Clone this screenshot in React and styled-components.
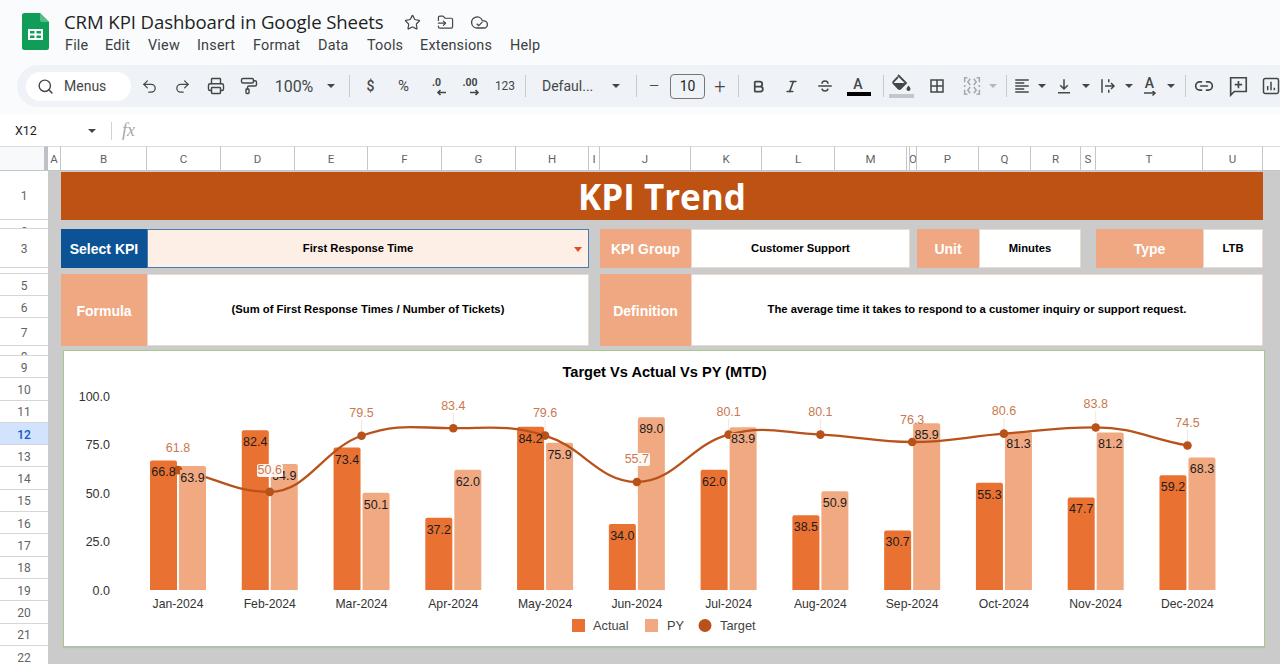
import React from "react";
import styled, { createGlobalStyle } from "styled-components";
import { Undo2, Redo2, Printer, PaintRoller, Search, Star, FolderInput, Bold, Italic, Link2 } from "lucide-react";

const Global = createGlobalStyle`
  html, body { margin: 0; padding: 0; background: #f9fbfd; }
  * { box-sizing: border-box; }
  body { font-family: Roboto, "Liberation Sans", sans-serif; }
`;

const Page = styled.div`
  width: 1280px; height: 664px; overflow: hidden; display: flex; flex-direction: column; background: #f9fbfd;
`;

/* ---------- title bar ---------- */
const TopBar = styled.header`
  height: 65px; flex: none; display: flex; align-items: flex-start; padding: 13px 0 0 22px; gap: 15px;
`;
const LogoWrap = styled.div`width: 27px; height: 37px; flex: none;`;
const TitleCol = styled.div`display: flex; flex-direction: column; gap: 4px; margin-top: -1px;`;
const TitleRow = styled.div`display: flex; align-items: center; height: 20px;`;
const DocTitle = styled.h1`
  margin: 0; font: 400 18.6px/20px "Open Sans", Roboto, sans-serif; color: #1f1f1f; letter-spacing: -0.1px; width: 320px; white-space: nowrap;
`;
const TitleIcon = styled.span`
  display: flex; width: ${(p) => p.$w}px; justify-content: center; color: #444746; margin-left: ${(p) => p.$ml || 0}px;
`;
const Menu = styled.nav`display: flex; padding-left: 1px;`;
const MenuItem = styled.span`
  font: 400 14.4px/20px Roboto, sans-serif; color: #3c4043; width: ${(p) => p.$w}px; letter-spacing: 0.2px;
`;

/* ---------- toolbar ---------- */
const Toolbar = styled.div`
  height: 42px; flex: none; margin-left: 17px; background: #eff3f8; border-radius: 21px 0 0 21px;
  display: flex; align-items: center; padding-left: 9px; overflow: hidden;
`;
const SearchPill = styled.div`
  width: 105px; height: 29px; flex: none; background: #fff; border-radius: 15px; display: flex; align-items: center;
  padding-left: 11px; gap: 10px; color: #444746; font: 400 14px Roboto, sans-serif; margin-right: 2px;
`;
const Tool = styled.div`
  width: ${(p) => p.$w}px; flex: none; height: 30px; display: flex; align-items: center; justify-content: ${(p) => p.$left ? "flex-start" : "center"};
  color: ${(p) => p.$muted ? "#a9acaf" : "#444746"}; font: ${(p) => p.$weight || 400} ${(p) => p.$size || 14}px Roboto, sans-serif;
  padding-left: ${(p) => p.$pl || 0}px;
`;
const Caret = styled.i`
  width: 0; height: 0; border-left: 4px solid transparent; border-right: 4px solid transparent;
  border-top: 4.5px solid ${(p) => p.$muted ? "#b5b8bb" : "#444746"};
`;
const Divider = styled.span`
  width: 1px; height: 22px; flex: none; background: #c7c9cc; margin-left: ${(p) => p.$l}px; margin-right: ${(p) => p.$r}px;
`;
const SizeBox = styled.div`
  width: 35px; height: 25px; margin-left: 4px; flex: none; border: 1px solid #747775; border-radius: 4px; display: flex; align-items: center;
  justify-content: center; font: 400 14px Roboto, sans-serif; color: #1f1f1f;
`;
const Decimal = styled.span`
  display: flex; flex-direction: column; align-items: center; font: 700 10.5px/10px Roboto, sans-serif; color: #444746;
`;
const DecimalArrow = styled.span`margin-left: 9px; height: 7px; display: block;`;
const LetterIcon = styled.span`
  display: flex; flex-direction: column; align-items: center; gap: 0; font: 500 14px/15px Roboto, sans-serif; color: #444746;
`;
const ColorBar = styled.i`display: block; width: 24px; height: 4px; background: #000; margin-left: 2px;`;

const Svg = ({ size = 18, children, ...r }) => (
  <svg width={size} height={size} viewBox="0 0 24 24" fill="none" stroke="currentColor" strokeWidth="2" {...r}>{children}</svg>
);

/* ---------- formula bar ---------- */
const FormulaBar = styled.div`
  height: 31px; flex: none; display: flex; align-items: center; background: #fff; padding-left: 15px; margin-top: 8px;
`;
const NameBox = styled.div`
  width: 83px; display: flex; align-items: center; justify-content: space-between; font: 400 12.5px Roboto, sans-serif; color: #1f1f1f; padding-right: 2px;
`;
const BarRule = styled.span`width: 1px; height: 18px; background: #d0d3d6; margin-left: 13px;`;
const Fx = styled.span`
  font: italic 400 18px "Liberation Serif", serif; color: #a5a8ab; margin-left: 10px;
`;

/* ---------- sheet grid ---------- */
const COLS = [["A",13],["B",86],["C",74],["D",74],["E",73],["F",74],["G",74],["H",73],["I",11],["J",91],["K",71],["L",73],["M",72],["N",3],["O",7],["P",62],["Q",52],["R",50],["S",15],["T",107],["U",60]];
const ROW_H = [49,9,39,6,22,22,28,10,...Array(14).fill(22.3)];

const Sheet = styled.div`
  flex: 1; min-height: 0; overflow: hidden; background: #cbcbcb; display: grid;
  grid-template-columns: 48px ${COLS.map((c) => c[1] + "px").join(" ")} 17px;
  grid-template-rows: 25px ${ROW_H.map((h) => h + "px").join(" ")};
`;
const Corner = styled.div`
  grid-column: 1; grid-row: 1; background: #f8f9fa; border-bottom: 1px solid #c4c7c5; border-top: 1px solid #dadce0; border-right: 4px solid #bdc1c6;
`;
const ColHead = styled.div`
  grid-row: 1; background: #fff; border-top: 1px solid #dadce0; border-bottom: 1px solid #c4c7c5; border-right: 1px solid #c4c7c5;
  display: flex; align-items: center; justify-content: center; overflow: hidden; padding-top: 1px; font: 400 11.5px Roboto, sans-serif; color: #5f6368;
`;
const HeadFill = styled(ColHead)`border-right: 0;`;
const RowHead = styled.div`
  grid-column: 1; overflow: hidden; display: flex; justify-content: center; align-items: ${(p) => p.$clip ? "flex-start" : "center"};
  padding-top: ${(p) => p.$clip ? p.$clip : 2}px; border-bottom: 1px solid #d4d6d8; font: ${(p) => p.$on ? 500 : 400} 12px/12px Roboto, sans-serif;
  color: ${(p) => p.$on ? "#0b57d0" : "#5f6368"}; background: ${(p) => p.$on ? "#d3e3fd" : "#fff"};
`;
const Banner = styled.div`
  grid-column: 3 / 23; grid-row: 2; margin-top: 1px; background: #bd5212; color: #fff; display: flex; align-items: center; justify-content: center;
  font: 700 35px "Open Sans", Roboto, sans-serif; letter-spacing: 0;
`;
const Cell = styled.div`
  grid-column: ${(p) => p.$c}; grid-row: ${(p) => p.$r}; display: flex; align-items: center; justify-content: center; position: relative;
`;
const Label = styled(Cell)`
  background: ${(p) => p.$blue ? "#0b5394" : "#f0a882"}; color: #fff; font: 700 14px "Liberation Sans", sans-serif; padding-top: 1px;
`;
const Value = styled(Cell)`
  background: ${(p) => p.$select ? "#fdeee6" : "#fff"}; color: #000; font: 700 11.25px "Liberation Sans", sans-serif;
  border: 1px solid ${(p) => p.$select ? "#4a7db3" : "#ead9cd"}; padding-bottom: 2px; padding-right: ${(p) => p.$select ? 20 : 0}px;
`;
const DropCaret = styled.i`
  position: absolute; right: 6px; top: 50%; margin-top: -2px; width: 0; height: 0;
  border-left: 4.5px solid transparent; border-right: 4.5px solid transparent; border-top: 5px solid #d9541e;
`;
const ChartCard = styled.section`
  grid-column: 3 / 24; grid-row: 9 / 24; align-self: start; height: 297px; margin: 4px 15px 0 2px; background: #fff;
  border: 1px solid #a9c98c; box-shadow: 0 1px 1px rgba(0,0,0,.08);
`;
const ChartSvg = styled.svg`display: block; width: 100%; height: 100%;`;

/* ---------- chart ---------- */
const MONTHS = ["Jan","Feb","Mar","Apr","May","Jun","Jul","Aug","Sep","Oct","Nov","Dec"];
const ACTUAL = [66.8,82.4,73.4,37.2,84.2,34.0,62.0,38.5,30.7,55.3,47.7,59.2];
const PY = [63.9,64.9,50.1,62.0,75.9,89.0,83.9,50.9,85.9,81.3,81.2,68.3];
const TARGET = [61.8,50.6,79.5,83.4,79.6,55.7,80.1,80.1,76.3,80.6,83.8,74.5];
const LABEL_Y = [448,470,413,406,413,459,412,412,420,411,404,423];
const BASE = 590, UNIT = 1.94, STEP = 91.77, X0 = 178;
const cx = (i) => X0 + i * STEP;
const vy = (v) => BASE - v * UNIT;
const ORANGE = "#e97132", PEACH = "#f1a982", LINE = "#b9521a", TXT = "#1c1c1c";
const FONT = '"Liberation Sans", sans-serif';

const barPath = (x, w, v) => {
  const t = vy(v), r = 2;
  return `M${x} ${BASE}V${t + r}Q${x} ${t} ${x + r} ${t}H${x + w - r}Q${x + w} ${t} ${x + w} ${t + r}V${BASE}Z`;
};
const linePath = () => {
  const ys = TARGET.map(vy);
  const slope = ys.map((y, i) => {
    if (i === 0) return (ys[1] - y) / STEP * 0.7;
    if (i === ys.length - 1) return (y - ys[i - 1]) / STEP * 0.9;
    const a = y - ys[i - 1], b = ys[i + 1] - y;
    if (a * b < 0) return 0;
    return (ys[i + 1] - ys[i - 1]) / (2 * STEP);
  });
  let d = `M${cx(0)} ${ys[0]}`;
  for (let i = 0; i < ys.length - 1; i++) {
    const h = STEP / 2.4;
    d += `C${cx(i) + h} ${ys[i] + slope[i] * h} ${cx(i + 1) - h} ${ys[i + 1] - slope[i + 1] * h} ${cx(i + 1)} ${ys[i + 1]}`;
  }
  return d;
};

const Chart = () => (
  <ChartSvg viewBox="64 351 1200 295" fontFamily={FONT}>
    <text x="664.5" y="377" textAnchor="middle" fontSize="14.6" fontWeight="700" fill="#000">Target Vs Actual Vs PY (MTD)</text>
    {["100.0","75.0","50.0","25.0","0.0"].map((t, i) => (
      <text key={t} x="110" y={400.5 + i * 48.5} textAnchor="end" fontSize="12.5" fill="#333">{t}</text>
    ))}
    {MONTHS.map((m, i) => (
      <g key={m}>
        <path d={barPath(cx(i) - 28, 27, ACTUAL[i])} fill={ORANGE} />
        <path d={barPath(cx(i) + 1, 27, PY[i])} fill={PEACH} />
        <text x={cx(i)} y="608" textAnchor="middle" fontSize="12.2" fill="#333">{m}-2024</text>
      </g>
    ))}
    {TARGET.map((v, i) => i === 1 || i === 5 || i === 0 || i === 8 ? null : (
      <line key={i} x1={cx(i)} x2={cx(i)} y1={LABEL_Y[i] + 7} y2={vy(v)} stroke="#eadfd8" strokeWidth="0.8" />
    ))}
    <path d={linePath()} fill="none" stroke={LINE} strokeWidth="2.3" />
    {TARGET.map((v, i) => <circle key={i} cx={cx(i)} cy={vy(v)} r="4.3" fill={LINE} />)}
    <rect x="180" y="470" width="25.5" height="14" fill={PEACH} />
    <rect x={cx(6) + 2} y="433" width="25" height="13" fill={PEACH} />
    {MONTHS.map((m, i) => (
      <g key={m} fontSize="12.5" fill={TXT}>
        <text x={cx(i) - 14.5} y={vy(ACTUAL[i]) + 16} textAnchor="middle">{ACTUAL[i].toFixed(1)}</text>
        <text x={cx(i) + 14.5} y={vy(PY[i]) + 16} textAnchor="middle">{PY[i].toFixed(1)}</text>
      </g>
    ))}
    <rect x="257" y="464" width="26" height="13" rx="2" fill="#fff" opacity="0.92" />
    <rect x="625" y="453" width="25" height="13" rx="2" fill="#fff" opacity="0.92" />
    {TARGET.map((v, i) => (
      <text key={i} x={cx(i)} y={LABEL_Y[i] + 4} textAnchor="middle" fontSize="12.5" fill="#c9794f">{v.toFixed(1)}</text>
    ))}
    <rect x="572" y="619" width="13" height="13" fill={ORANGE} />
    <text x="593" y="630" fontSize="12.8" fill="#444">Actual</text>
    <rect x="645" y="619" width="13" height="13" fill={PEACH} />
    <text x="667" y="630" fontSize="12.8" fill="#444">PY</text>
    <circle cx="705" cy="625.5" r="6.5" fill={LINE} />
    <text x="720" y="630" fontSize="12.8" fill="#444">Target</text>
  </ChartSvg>
);

/* ---------- small pieces ---------- */
const SheetsLogo = () => (
  <svg width="27" height="37" viewBox="0 0 27 37">
    <path d="M2.5 0H18l9 9v25.500a2.500 2.500 0 0 1-2.500 2.500H2.500A2.500 2.500 0 0 1 0 34.500V2.500A2.500 2.500 0 0 1 2.500 0Z" fill="#0f9d58" />
    <path d="M18 0l9 9h-6.500A2.500 2.500 0 0 1 18 6.500Z" fill="#57bb8a" />
    <path d="M6 16h15v11H6Zm2 2v2.500h4.500V18Zm6.500 0v2.500H19V18ZM8 22.500V25h4.500v-2.500Zm6.500 0V25H19v-2.500Z" fill="#fff" fillRule="evenodd" />
  </svg>
);
const Arrow = ({ dir }) => (
  <svg width="11" height="7" viewBox="0 0 11 7" fill="none" stroke="currentColor" strokeWidth="1.600">
    {dir === "l" ? <path d="M10 3.500H2M4.500 1 2 3.500 4.500 6" /> : <path d="M1 3.500h8M6.500 1 9 3.500 6.500 6" />}
  </svg>
);

const App = () => (
  <Page>
    <Global />
    <TopBar>
      <LogoWrap><SheetsLogo /></LogoWrap>
      <TitleCol>
        <TitleRow>
          <DocTitle>CRM KPI Dashboard in Google Sheets</DocTitle>
          <TitleIcon $w={18} $ml={19}><Star size={17} strokeWidth={1.700} /></TitleIcon>
          <TitleIcon $w={18} $ml={15}><FolderInput size={17} strokeWidth={1.700} /></TitleIcon>
          <TitleIcon $w={20} $ml={15}>
            <Svg size={19} strokeWidth={1.700}>
              <path d="M17.500 19H9a7 7 0 1 1 6.710-9h1.790a4.500 4.500 0 1 1 0 9Z" />
              <path d="m8.500 13.500 2.500 2.500 4.500-4.500" />
            </Svg>
          </TitleIcon>
        </TitleRow>
        <Menu>
          {[["File",40],["Edit",43],["View",49],["Insert",56],["Format",65],["Data",49],["Tools",53],["Extensions",90],["Help",40]].map(([t, w]) => (
            <MenuItem key={t} $w={w}>{t}</MenuItem>
          ))}
        </Menu>
      </TitleCol>
    </TopBar>

    <Toolbar>
      <SearchPill><Search size={17} strokeWidth={2} />Menus</SearchPill>
      <Tool $w={33}><Undo2 size={17} strokeWidth={1.800} /></Tool>
      <Tool $w={33}><Redo2 size={17} strokeWidth={1.800} /></Tool>
      <Tool $w={33}><Printer size={18} strokeWidth={1.900} /></Tool>
      <Tool $w={33}><PaintRoller size={18} strokeWidth={1.900} /></Tool>
      <Tool $w={58} $size={16}>100%</Tool>
      <Tool $w={16}><Caret /></Tool>
      <Divider $l={10} $r={4} />
      <Tool $w={33} $size={14} $weight={500}>$</Tool>
      <Tool $w={33} $size={15}>%</Tool>
      <Tool $w={33}><Decimal>.0<DecimalArrow><Arrow dir="l" /></DecimalArrow></Decimal></Tool>
      <Tool $w={34}><Decimal>.00<DecimalArrow><Arrow dir="r" /></DecimalArrow></Decimal></Tool>
      <Tool $w={36} $size={12}>123</Tool>
      <Divider $l={2} $r={6} />
      <Tool $w={76} $left $pl={10} $size={14}>Defaul...</Tool>
      <Tool $w={16}><Caret /></Tool>
      <Divider $l={12} $r={5} />
      <Tool $w={24} $size={20} $weight={300}>−</Tool>
      <SizeBox>10</SizeBox>
      <Tool $w={30} $size={20} $weight={300}>+</Tool>
      <Divider $l={3} $r={3} />
      <Tool $w={33}><Bold size={15} strokeWidth={2.800} /></Tool>
      <Tool $w={33}><Italic size={15} strokeWidth={2.600} /></Tool>
      <Tool $w={33}>
        <Svg><path d="M3 12h18" /><path d="M8 9c0-5 8-5 8 0" /><path d="M8 15.500c.5 4 7.500 4 8 0" /></Svg>
      </Tool>
      <Tool $w={34}><LetterIcon>A<ColorBar /></LetterIcon></Tool>
      <Divider $l={8} $r={0} />
      <Tool $w={34}>
        <svg width="25" height="26" viewBox="0 0 25 26">
          <path d="M9 2 17 10 11.500 15.500a1.500 1.500 0 0 1-2 0L4.500 10.500a1.500 1.500 0 0 1 0-2L9 4" fill="none" stroke="currentColor" strokeWidth="1.800" />
          <path d="M4.500 10h12l-5.500 5.500a1.500 1.500 0 0 1-2 0Z" fill="currentColor" />
          <path d="M19.500 12.500c1.500 2 2 2.700 2 3.500a2 2 0 0 1-4 0c0-.8.500-1.500 2-3.500Z" fill="currentColor" />
          <rect x="0" y="21" width="25" height="4" fill="#c4c7c9" />
        </svg>
      </Tool>
      <Tool $w={38}>
        <Svg strokeWidth={2}><rect x="4" y="4" width="16" height="16" /><path d="M12 4v16M4 12h16" /></Svg>
      </Tool>
      <Tool $w={32} $muted>
        <Svg size={22} strokeWidth={1.800}>
          <path d="M7 3H4v5M4 11v2M4 16v5h3M17 3h3v5M20 11v2M20 16v5h-3M10 4l-2.500 3.500L10 11M14 4l2.500 3.500L14 11M10 13l-2.500 3.500L10 20M14 13l2.500 3.500L14 20" />
        </Svg>
      </Tool>
      <Tool $w={10}><Caret $muted /></Tool>
      <Divider $l={8} $r={0} />
      <Tool $w={30}>
        <Svg strokeWidth={1.800}><path d="M3 4h18M3 8h12M3 12h18M3 16h12M3 20h18" /></Svg>
      </Tool>
      <Tool $w={10}><Caret /></Tool>
      <Tool $w={34}>
        <Svg strokeWidth={2}><path d="M12 3v13M7 11l5 5 5-5M4 21h16" /></Svg>
      </Tool>
      <Tool $w={10}><Caret /></Tool>
      <Tool $w={34}>
        <Svg strokeWidth={2}><path d="M4 3v18M13 3v4M13 17v4M8 12h12M16 8l4 4-4 4" /></Svg>
      </Tool>
      <Tool $w={8}><Caret /></Tool>
      <Tool $w={33}>
        <LetterIcon>A<svg width="14" height="6" viewBox="0 0 14 6" fill="none" stroke="currentColor" strokeWidth="1.500"><path d="M1 2h11M9.500 0l2.500 2-2.500 2.500" /></svg></LetterIcon>
      </Tool>
      <Tool $w={9}><Caret /></Tool>
      <Divider $l={10} $r={0} />
      <Tool $w={35}><Link2 size={20} strokeWidth={2} /></Tool>
      <Tool $w={33}>
        <Svg size={22} strokeWidth={1.800}><path d="M4 3h17v15H8l-4 4Z" /><path d="M12.500 6.500v8M8.500 10.500h8" /></Svg>
      </Tool>
      <Tool $w={33}>
        <Svg size={20} strokeWidth={1.800}><rect x="3" y="3" width="18" height="18" rx="2" /><path d="M8 12v5M12 7v10M16 14v3" /></Svg>
      </Tool>
    </Toolbar>

    <FormulaBar>
      <NameBox>X12<Caret /></NameBox>
      <BarRule />
      <Fx>fx</Fx>
    </FormulaBar>

    <Sheet>
      <Corner />
      {COLS.map(([c], i) => (
        <ColHead key={c} style={{ gridColumn: i + 2 }}>{c === "N" ? "" : c}</ColHead>
      ))}
      <HeadFill style={{ gridColumn: 23 }} />
      {ROW_H.map((h, i) => {
        const n = i + 1;
        const clip = n === 2 ? 6 : n === 4 ? 4 : n === 8 ? 5 : 0;
        return <RowHead key={n} style={{ gridRow: n + 1 }} $clip={clip} $on={n === 12}>{n}</RowHead>;
      })}
      <Banner>KPI Trend</Banner>

      <Label $blue $c="3" $r="4">Select KPI</Label>
      <Value $select $c="4 / 10" $r="4">First Response Time<DropCaret /></Value>
      <Label $c="11" $r="4">KPI Group</Label>
      <Value $c="12 / 16" $r="4">Customer Support</Value>
      <Label $c="17" $r="4">Unit</Label>
      <Value $c="18 / 20" $r="4">Minutes</Value>
      <Label $c="21" $r="4">Type</Label>
      <Value $c="22" $r="4">LTB</Value>

      <Label $c="3" $r="6 / 9">Formula</Label>
      <Value $c="4 / 10" $r="6 / 9">(Sum of First Response Times / Number of Tickets)</Value>
      <Label $c="11" $r="6 / 9">Definition</Label>
      <Value $c="12 / 23" $r="6 / 9">The average time it takes to respond to a customer inquiry or support request.</Value>

      <ChartCard><Chart /></ChartCard>
    </Sheet>
  </Page>
);

export default App;
